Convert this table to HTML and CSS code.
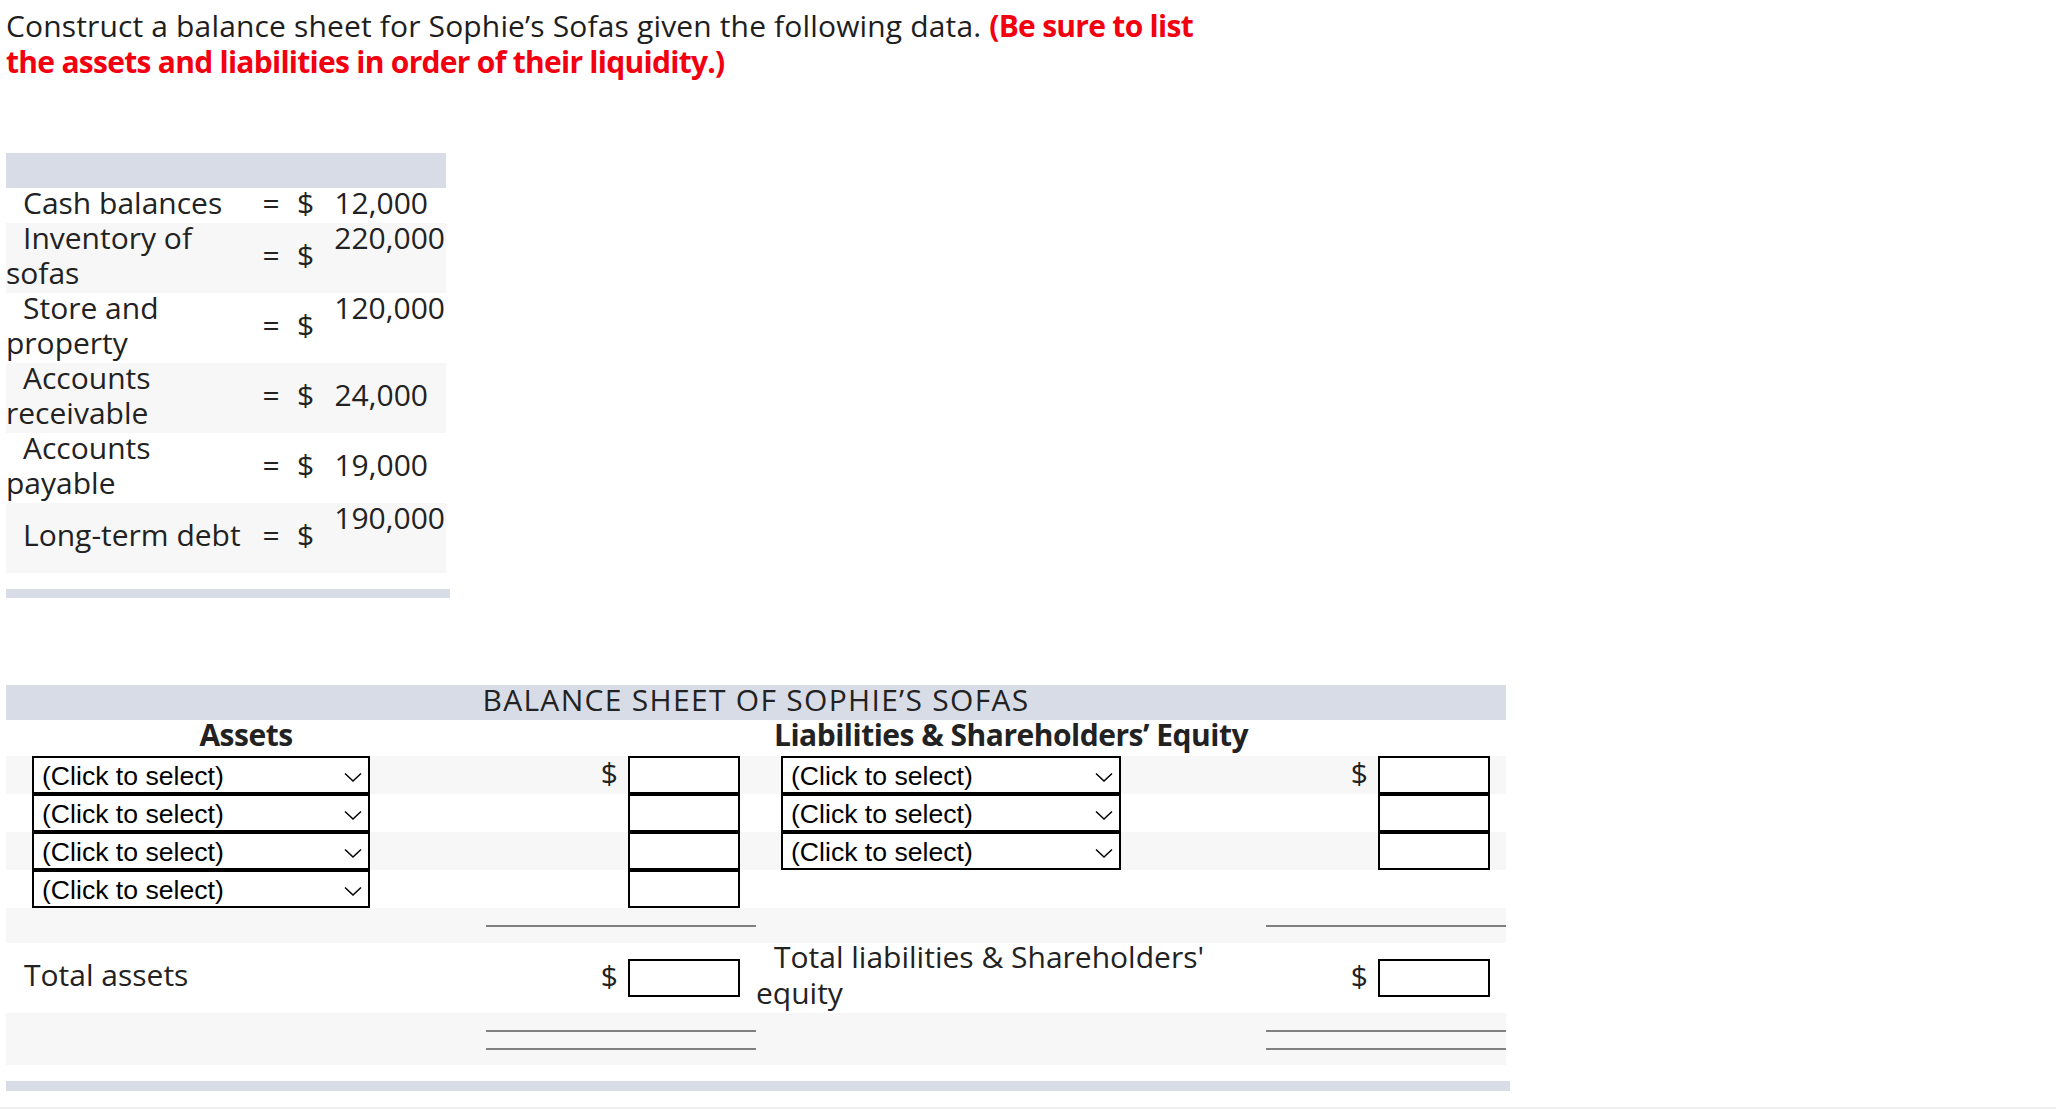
FILE: index.html
```html
<!DOCTYPE html>
<html lang="en">
<head>
<meta charset="utf-8">
<title>Sophie's Sofas balance sheet</title>
<link rel="stylesheet" href="styles.css">
</head>
<body>
<div class="page">
  <p class="prompt">Construct a balance sheet for Sophie’s Sofas given the following data. <strong class="note">(Be sure to list the assets and liabilities in order of their liquidity.)</strong></p>

  <div class="data">
    <div class="data-head"></div>
    <div class="drow">
      <div class="dlabel">Cash balances</div><div class="deq">=</div><div class="dcur">$</div><div class="dnum">12,000</div>
    </div>
    <div class="drow tall shade">
      <div class="dlabel">Inventory of sofas</div><div class="deq">=</div><div class="dcur">$</div><div class="dnum wide">220,000</div>
    </div>
    <div class="drow tall">
      <div class="dlabel">Store and property</div><div class="deq">=</div><div class="dcur">$</div><div class="dnum wide">120,000</div>
    </div>
    <div class="drow tall shade">
      <div class="dlabel">Accounts receivable</div><div class="deq">=</div><div class="dcur">$</div><div class="dnum">24,000</div>
    </div>
    <div class="drow tall">
      <div class="dlabel">Accounts payable</div><div class="deq">=</div><div class="dcur">$</div><div class="dnum">19,000</div>
    </div>
    <div class="drow tall shade">
      <div class="dlabel">Long-term debt</div><div class="deq">=</div><div class="dcur">$</div><div class="dnum wide">190,000</div>
    </div>
  </div>
  <div class="bar data-bar"></div>

  <div class="bs">
    <div class="bs-title">BALANCE SHEET OF SOPHIE’S SOFAS</div>
    <div class="bs-row bs-head">
      <div class="head">Assets</div><div></div><div class="head">Liabilities &amp; Shareholders’ Equity</div><div></div>
    </div>

    <div class="bs-row entry shade">
      <div class="cell-a"><div class="pick"><span>(Click to select)</span><svg class="chev" width="18" height="10" viewBox="0 0 18 10"><path d="M1 1.5 L9 9 L17 1.5" fill="none" stroke="#000" stroke-width="1.5"/></svg></div></div>
      <div class="money"><span class="dollar">$</span><div class="box"></div></div>
      <div class="cell-l"><div class="pick"><span>(Click to select)</span><svg class="chev" width="18" height="10" viewBox="0 0 18 10"><path d="M1 1.5 L9 9 L17 1.5" fill="none" stroke="#000" stroke-width="1.5"/></svg></div></div>
      <div class="money"><span class="dollar">$</span><div class="box"></div></div>
    </div>
    <div class="bs-row entry">
      <div class="cell-a"><div class="pick"><span>(Click to select)</span><svg class="chev" width="18" height="10" viewBox="0 0 18 10"><path d="M1 1.5 L9 9 L17 1.5" fill="none" stroke="#000" stroke-width="1.5"/></svg></div></div>
      <div class="money"><div class="box"></div></div>
      <div class="cell-l"><div class="pick"><span>(Click to select)</span><svg class="chev" width="18" height="10" viewBox="0 0 18 10"><path d="M1 1.5 L9 9 L17 1.5" fill="none" stroke="#000" stroke-width="1.5"/></svg></div></div>
      <div class="money"><div class="box"></div></div>
    </div>
    <div class="bs-row entry shade">
      <div class="cell-a"><div class="pick"><span>(Click to select)</span><svg class="chev" width="18" height="10" viewBox="0 0 18 10"><path d="M1 1.5 L9 9 L17 1.5" fill="none" stroke="#000" stroke-width="1.5"/></svg></div></div>
      <div class="money"><div class="box"></div></div>
      <div class="cell-l"><div class="pick"><span>(Click to select)</span><svg class="chev" width="18" height="10" viewBox="0 0 18 10"><path d="M1 1.5 L9 9 L17 1.5" fill="none" stroke="#000" stroke-width="1.5"/></svg></div></div>
      <div class="money"><div class="box"></div></div>
    </div>
    <div class="bs-row entry">
      <div class="cell-a"><div class="pick"><span>(Click to select)</span><svg class="chev" width="18" height="10" viewBox="0 0 18 10"><path d="M1 1.5 L9 9 L17 1.5" fill="none" stroke="#000" stroke-width="1.5"/></svg></div></div>
      <div class="money"><div class="box"></div></div>
      <div></div>
      <div></div>
    </div>

    <div class="bs-row rule-row shade">
      <div></div><div class="rules"><div class="rule"></div></div><div></div><div class="rules"><div class="rule"></div></div>
    </div>

    <div class="bs-row total-row">
      <div class="tlabel">Total assets</div>
      <div class="money"><span class="dollar">$</span><div class="box"></div></div>
      <div class="tlabel">Total liabilities &amp; Shareholders' equity</div>
      <div class="money"><span class="dollar">$</span><div class="box"></div></div>
    </div>

    <div class="bs-row double-row shade">
      <div></div><div class="rules"><div class="rule"></div><div class="rule"></div></div><div></div><div class="rules"><div class="rule"></div><div class="rule"></div></div>
    </div>
  </div>
  <div class="bar bs-bar"></div>
</div>
<div class="sep"></div>
</body>
</html>
```

FILE: styles.css
```css
html, body {
  margin: 0;
  padding: 0;
  background: #fff;
}

body {
  font-family: "Open Sans", "Noto Sans", sans-serif;
  font-size: 30px;
  color: #222;
}

.page {
  padding: 8px 0 0 6px;
}

.prompt {
  margin: 0;
  max-width: 1215px;
  line-height: 36px;
  color: #1e1e1e;
  letter-spacing: 0.15px;
}

.note {
  color: #f2000f;
  font-weight: 700;
  letter-spacing: -0.72px;
}

/* data table */
.data {
  width: 440px;
  margin-top: 73px;
}

.data-head {
  height: 35px;
  background: #d8dce7;
}

.drow {
  display: grid;
  grid-template-columns: 250px 30px 39px 121px;
  grid-template-rows: 35px;
  height: 35px;
  line-height: 35px;
}

.drow.tall {
  grid-template-rows: 70px;
  height: 70px;
}

.shade {
  background: #f7f7f7;
}

.dlabel {
  align-self: center;
  text-indent: 17px;
  margin-top: -7px;
}

.deq, .dcur {
  align-self: center;
  text-align: center;
  margin-top: -7px;
}

.dnum {
  align-self: center;
  text-align: right;
  padding-right: 18px;
  margin-top: -7px;
}

.dnum.wide {
  align-self: start;
  padding-right: 1px;
  margin-top: -3px;
}

.bar {
  background: #d8dce7;
  margin-top: 16px;
}

.data-bar {
  width: 444px;
  height: 9px;
}

/* balance sheet */
.bs {
  width: 1500px;
  margin-top: 87px;
}

.bs-title {
  height: 35px;
  line-height: 29px;
  background: #d8dce7;
  text-align: center;
  letter-spacing: 1.3px;
}

.bs-row {
  display: grid;
  grid-template-columns: 480px 270px 510px 240px;
}

.bs-head {
  height: 36px;
  grid-template-rows: 36px;
  line-height: 30px;
}

.head {
  text-align: center;
  font-weight: 700;
  letter-spacing: -0.5px;
}

.entry {
  height: 38px;
  grid-template-rows: 38px;
}

.cell-a {
  padding-left: 26px;
}

.cell-l {
  padding-left: 25px;
}

.pick {
  box-sizing: border-box;
  width: 340px;
  height: 38px;
  border: 2px solid #000;
  background: #fff;
  display: flex;
  align-items: center;
  justify-content: space-between;
  padding: 2px 6px 0 8px;
  font-family: "Liberation Sans", Arial, sans-serif;
  font-size: 26.6px;
  color: #000;
}

.cell-a .pick {
  width: 338px;
}

.chev {
  display: block;
  margin-top: 2px;
}

.money {
  display: flex;
  justify-content: flex-end;
  align-items: center;
  gap: 10px;
  padding-right: 16px;
}

.dollar {
  line-height: 30px;
  margin-top: -4px;
}

.box {
  box-sizing: border-box;
  width: 112px;
  height: 38px;
  border: 2px solid #000;
  background: #fff;
}

.rule-row {
  height: 35px;
  grid-template-rows: 35px;
}

.rules {
  display: flex;
  flex-direction: column;
  gap: 16px;
  padding-top: 17px;
}

.rule {
  height: 2px;
  background: #808080;
}

.total-row {
  height: 70px;
  grid-template-rows: 70px;
  line-height: 36px;
}

.tlabel {
  align-self: center;
  text-indent: 18px;
  margin-top: -7px;
}

.double-row {
  height: 52px;
  grid-template-rows: 52px;
}

.bs-bar {
  width: 1504px;
  height: 10px;
}

.sep {
  margin-top: 16px;
  height: 2px;
  background: #efefef;
}
```
